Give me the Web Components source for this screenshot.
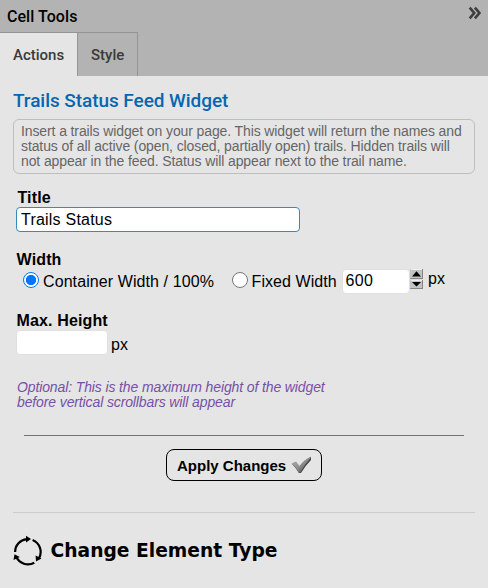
<!DOCTYPE html>
<html lang="en"><head><meta charset="utf-8"><title>Cell Tools</title>
<style>
html,body{margin:0;height:100%;background:#e5e5e5}
body{font:16px/18px "Liberation Sans",Arial,sans-serif;color:#000;overflow:hidden}
</style></head><body>
<cell-panel>
<panel-header slot="header" label="Cell Tools">
<panel-tab selected>Actions</panel-tab><panel-tab>Style</panel-tab>
</panel-header>
<info-box>Insert a trails widget on your page. This widget will return the names and<br>status of all active (open, closed, partially open) trails. Hidden trails will<br>not appear in the feed. Status will appear next to the trail name.</info-box>
<form-field label="Title" style="margin-top:14px;height:45px"><text-box focused value="Trails Status" style="width:284px;height:25px;letter-spacing:.22px"></text-box></form-field>
<form-field label="Width" style="margin-top:17px;height:46px"><width-options></width-options></form-field>
<form-field label="Max. Height" style="margin-top:15px;height:44px"><text-box style="width:92px;height:25px"></text-box><span style="margin:6px 0 0 3px">px</span></form-field>
<hint-text>Optional: This is the maximum height of the widget<br>before vertical scrollbars will appear</hint-text>
<apply-button>Apply Changes</apply-button>
<change-type>Change Element Type</change-type>
</cell-panel>
<script>
const define = (name, html) => customElements.define(name, class extends HTMLElement {
  constructor() {
    super();
    const t = document.createElement('template');
    t.innerHTML = html(this);
    this.attachShadow({mode: 'open'}).append(t.content.cloneNode(true));
  }
});
const attr = (e, n) => e.getAttribute(n) || '';

define('cell-panel', () => `<style>:host{display:flex;flex-direction:column;height:588px;width:488px}
main{display:flex;flex-direction:column;padding:0 13px}
h2{margin:0;height:43px;box-sizing:border-box;padding-top:14px;font:500 19px/21px Roboto,sans-serif;color:#0567b3;letter-spacing:-.06px;white-space:nowrap}</style>
<slot name="header"></slot><main><h2>Trails Status Feed Widget</h2><slot></slot></main>`);

define('panel-header', e => `<style>:host{display:flex;flex-direction:column;height:76px;background:#b3b3b3;font-family:Roboto,sans-serif;font-weight:500}
header{height:32px;display:flex;justify-content:space-between;padding:0 6px 0 7px;line-height:33px;font-size:16px}
header span{letter-spacing:.05px}
svg{margin-top:6px}nav{display:flex;height:44px}</style>
<header><span>${attr(e,'label')}</span><svg width="14" height="14" viewBox="0 0 14 14" fill="none" stroke="#3e3e3e" stroke-width="2.6"><path d="M1.7 1.7 6.2 7 1.7 12.3M6.9 1.7 11.4 7 6.9 12.3"/></svg></header><nav><slot></slot></nav>`);

define('panel-tab', () => `<style>:host{display:block;box-sizing:border-box;height:44px;border:solid #959595;border-width:1px 1px 0 0;padding:0 13px;color:#3a3a3a;font-size:15px;line-height:44px}
:host([selected]){background:#e5e5e5;width:78px}:host(:not([selected])){width:60px}</style><slot></slot>`);

define('info-box', () => `<style>:host{display:block;box-sizing:border-box;width:462px;height:55px;border:1px solid #bebebe;border-radius:6px;padding:4px 7px;font-size:14px;line-height:15px;letter-spacing:-.11px;color:#666;white-space:nowrap}</style><slot></slot>`);

define('form-field', e => `<style>:host{display:flex;flex-direction:column;padding-left:3px;box-sizing:border-box}
label{font-weight:bold;height:19px;line-height:20px;padding-left:${attr(e,'label')==='Title'?1.5:.6}px;letter-spacing:.13px;white-space:nowrap}div{display:flex}</style>
<label>${attr(e,'label')}</label><div><slot></slot></div>`);

define('text-box', e => `<style>:host{display:block;box-sizing:border-box;background:#fff;border:1px solid #e0e0e0;border-radius:4px;padding-left:4px;line-height:23px}
:host([focused]){border-color:#368bb8}</style>${attr(e,'value')}`);

define('radio-dot', () => `<style>:host{display:block;box-sizing:border-box;width:16px;height:16px;border:1px solid #767676;border-radius:50%;background:#fff}
:host([checked]){border:1.5px solid #0075ff;background:radial-gradient(circle,#0075ff 4.8px,#fff 5.4px)}</style>`);

define('spin-arrows', () => `<style>:host{display:block;width:13px;height:20px}svg{display:block}</style>
<svg width="13" height="20" viewBox="0 0 13 20"><path fill="#c3c3c3" d="M0 0h13v20H0z"/><path fill="#e5e5e5" d="M0 9.7h13v1H0z"/><path fill="#eee" d="M1 0h12v1H1zM1 11h12v1H1z"/><path fill="#858585" d="M12 0h1v9.5h-1zM1 9h12v1H1zM12 11h1v9h-1zM1 19h12v1H1z"/><path fill="#8585ff" d="M0 9h1v1H0zM0 19h1v1H0z"/><path d="M6.5 2.2 11 7.6H2zM6.5 17.6 2 13h9z"/></svg>`);

define('width-options', () => `<style>:host{display:flex;height:27px;white-space:nowrap}
radio-dot{margin-top:3px}.a{width:189px;margin:4px 0 0 4px;letter-spacing:.09px}.b{width:87px;margin:4px 0 0 3.6px;letter-spacing:.06px}</style>
<radio-dot checked style="margin-left:7px"></radio-dot><span class="a">Container Width / 100%</span>
<radio-dot></radio-dot><span class="b">Fixed Width</span><text-box value="600" style="width:68px;height:25px;margin-left:3.4px;line-height:22px;padding-left:2.5px;letter-spacing:.4px"></text-box><spin-arrows></spin-arrows><span style="margin:1px 0 0 5px">px</span>`);

define('hint-text', () => `<style>:host{display:block;margin-top:25px;padding-left:4px;height:31px;font:italic 14px/15px "Liberation Sans",Arial,sans-serif;letter-spacing:-.12px;color:#7551a5;white-space:nowrap}</style><slot></slot>`);

define('apply-button', () => `<style>:host{display:flex;justify-content:center;border-top:1px solid #757575;margin:24px 11px 0;padding-top:13px;height:33px}
button{all:unset;box-sizing:border-box;display:flex;align-items:center;width:156px;height:32px;border:1px solid #000;border-radius:8px;padding:2px 0 0 10px;font:bold 15px/18px "Liberation Sans",Arial,sans-serif;white-space:nowrap}
svg{margin:-2px 0 0 5px}</style><button><slot></slot><svg width="21" height="18" viewBox="0 0 21 18"><defs><linearGradient id="g" x2="1" y2="1"><stop stop-color="#b0b0b0"/><stop offset=".5" stop-color="#929292"/><stop offset="1" stop-color="#333"/></linearGradient></defs><path fill="#444" d="M1 8 4.5 6.5 8 11Q13 4 20 1v3Q14 10 10 17H8Q5 12 1 8z"/><path fill="url(#g)" d="M.5 7.5 5 5.5 8.5 10Q13 4 19.5.5V2Q14 8 9.3 16.5H7.5Q5 11 .5 7.5z"/></svg></button>`);

define('change-type', () => `<style>:host{display:flex;align-items:center;margin-top:30px;border-top:1px solid #ccc;height:75px;font:bold 18.7px/22px "DejaVu Sans",sans-serif;white-space:nowrap}
svg{margin:1px 7.5px 0 0;flex:none}</style><svg width="30" height="32" viewBox="0 0 30 32"><g fill="none" stroke="#000" stroke-width="2.2"><path d="M2.1 17A13 13 0 0 1 13.7 4.1M19.6 4.9A13 13 0 0 1 25.8 23.6M21.3 27.7A13 13 0 0 1 3.2 21.8"/></g><path d="M13 .8 18 4 13 7.4zM28.5 23.5 23 26.6 22.6 20.5zM.5 25 1.5 19.3 6.8 22z"/></svg><slot></slot>`);
</script></body></html>
